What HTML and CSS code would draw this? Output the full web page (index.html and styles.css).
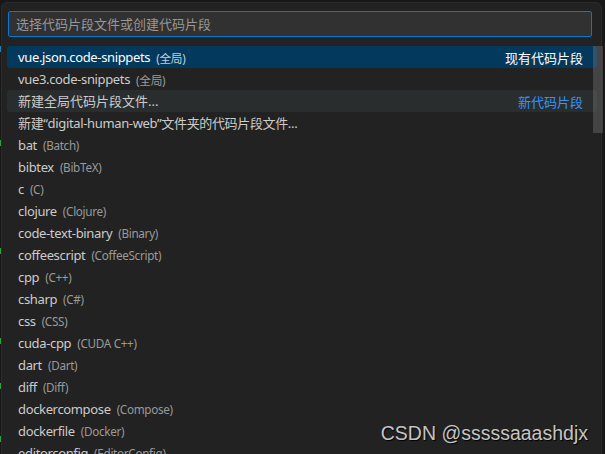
FILE: index.html
```html
<!DOCTYPE html>
<html lang="zh-CN">
<head>
<meta charset="utf-8">
<title>代码片段</title>
<link rel="stylesheet" href="styles.css">
</head>
<body>
<div class="gutter">
  <span class="mark blue m1"></span>
  <span class="mark green m2"></span>
  <span class="mark green m3"></span>
  <span class="mark green m4"></span>
  <span class="mark green m5"></span>
  <span class="mark green m6"></span>
</div>
<div class="panel">
  <div class="input">选择代码片段文件或创建代码片段</div>
  <div class="list">
    <div class="row selected"><span class="label">vue.json.code-snippets</span><span class="desc">(全局)</span><span class="sep sep-white">现有代码片段</span></div>
    <div class="row"><span class="label">vue3.code-snippets</span><span class="desc">(全局)</span></div>
    <div class="row hover"><span class="label cjk">新建全局代码片段文件...</span><span class="sep sep-blue">新代码片段</span></div>
    <div class="row"><span class="label">新建“digital-human-web”文件夹的代码片段文件...</span></div>
    <div class="row"><span class="label">bat</span><span class="desc">(Batch)</span></div>
    <div class="row"><span class="label">bibtex</span><span class="desc">(BibTeX)</span></div>
    <div class="row"><span class="label">c</span><span class="desc">(C)</span></div>
    <div class="row"><span class="label">clojure</span><span class="desc">(Clojure)</span></div>
    <div class="row"><span class="label">code-text-binary</span><span class="desc">(Binary)</span></div>
    <div class="row"><span class="label">coffeescript</span><span class="desc">(CoffeeScript)</span></div>
    <div class="row"><span class="label">cpp</span><span class="desc">(C++)</span></div>
    <div class="row"><span class="label">csharp</span><span class="desc">(C#)</span></div>
    <div class="row"><span class="label">css</span><span class="desc">(CSS)</span></div>
    <div class="row"><span class="label">cuda-cpp</span><span class="desc">(CUDA C++)</span></div>
    <div class="row"><span class="label">dart</span><span class="desc">(Dart)</span></div>
    <div class="row"><span class="label">diff</span><span class="desc">(Diff)</span></div>
    <div class="row"><span class="label">dockercompose</span><span class="desc">(Compose)</span></div>
    <div class="row"><span class="label">dockerfile</span><span class="desc">(Docker)</span></div>
    <div class="row"><span class="label">editorconfig</span><span class="desc">(EditorConfig)</span></div>
    <div class="scrollbar"></div>
  </div>
</div>
<div class="watermark">CSDN @sssssaaashdjx</div>
</body>
</html>
```
FILE: styles.css
```css
html, body {
  margin: 0;
  padding: 0;
  height: 100%;
  overflow: hidden;
  background: #181818;
}
body {
  position: relative;
  font-family: "Noto Sans", "Noto Sans CJK SC", sans-serif;
  font-size: 13px;
  color: #cccccc;
}
.gutter {
  position: absolute;
  left: 0;
  top: 0;
  width: 2px;
  height: 100%;
}
.mark {
  position: absolute;
  left: 0;
  width: 1px;
  height: 6px;
}
.blue { background: #1b81a8; }
.green { background: #2ea043; }
.m1 { top: 46px; }
.m2 { top: 140px; }
.m3 { top: 248px; }
.m4 { top: 338px; }
.m5 { top: 383px; }
.m6 { top: 436px; }
.panel {
  margin: 2px 3px 0 1px;
  height: 480px;
  background: #222222;
  border: 1px solid #2b2b2b;
  border-radius: 6px;
  padding: 8px 5px 0 5px;
  box-sizing: border-box;
}
.input {
  margin: 0 4px 0 1px;
  height: 26px;
  box-sizing: border-box;
  border: 1px solid #0078d4;
  border-radius: 2px;
  background: #313131;
  color: #989898;
  padding-left: 7px;
  line-height: 24px;
  font-size: 13px;
}
.list {
  position: relative;
  margin-top: 9px;
  margin-right: -1px;
}
.row {
  display: flex;
  align-items: center;
  height: 22px;
  padding: 0 14px 0 11px;
  border-radius: 3px;
  white-space: nowrap;
}
.row.selected {
  background: #04395e;
  color: #ffffff;
}
.row.hover {
  background: #2a2d2e;
}
.label {
  line-height: 22px;
  letter-spacing: -0.35px;
}
.label.cjk {
  letter-spacing: 0;
}
.desc {
  margin-left: 6px;
  font-size: 11.7px;
  letter-spacing: -0.3px;
  color: #9a9a9a;
}
.selected .desc {
  color: #c2cdd6;
}
.sep {
  margin-left: auto;
  font-size: 13px;
}
.sep-white { color: #ffffff; }
.sep-blue { color: #3794ff; }
.scrollbar {
  position: absolute;
  top: 0;
  right: -6px;
  width: 10px;
  height: 87px;
  background: rgba(121, 121, 121, 0.4);
}
.watermark {
  position: absolute;
  right: 17px;
  bottom: 9px;
  font-family: "Liberation Sans", Arial, sans-serif;
  font-size: 19.5px;
  color: #c4c4c4;
  text-shadow: 1px 1px 1px #000000;
}
```
